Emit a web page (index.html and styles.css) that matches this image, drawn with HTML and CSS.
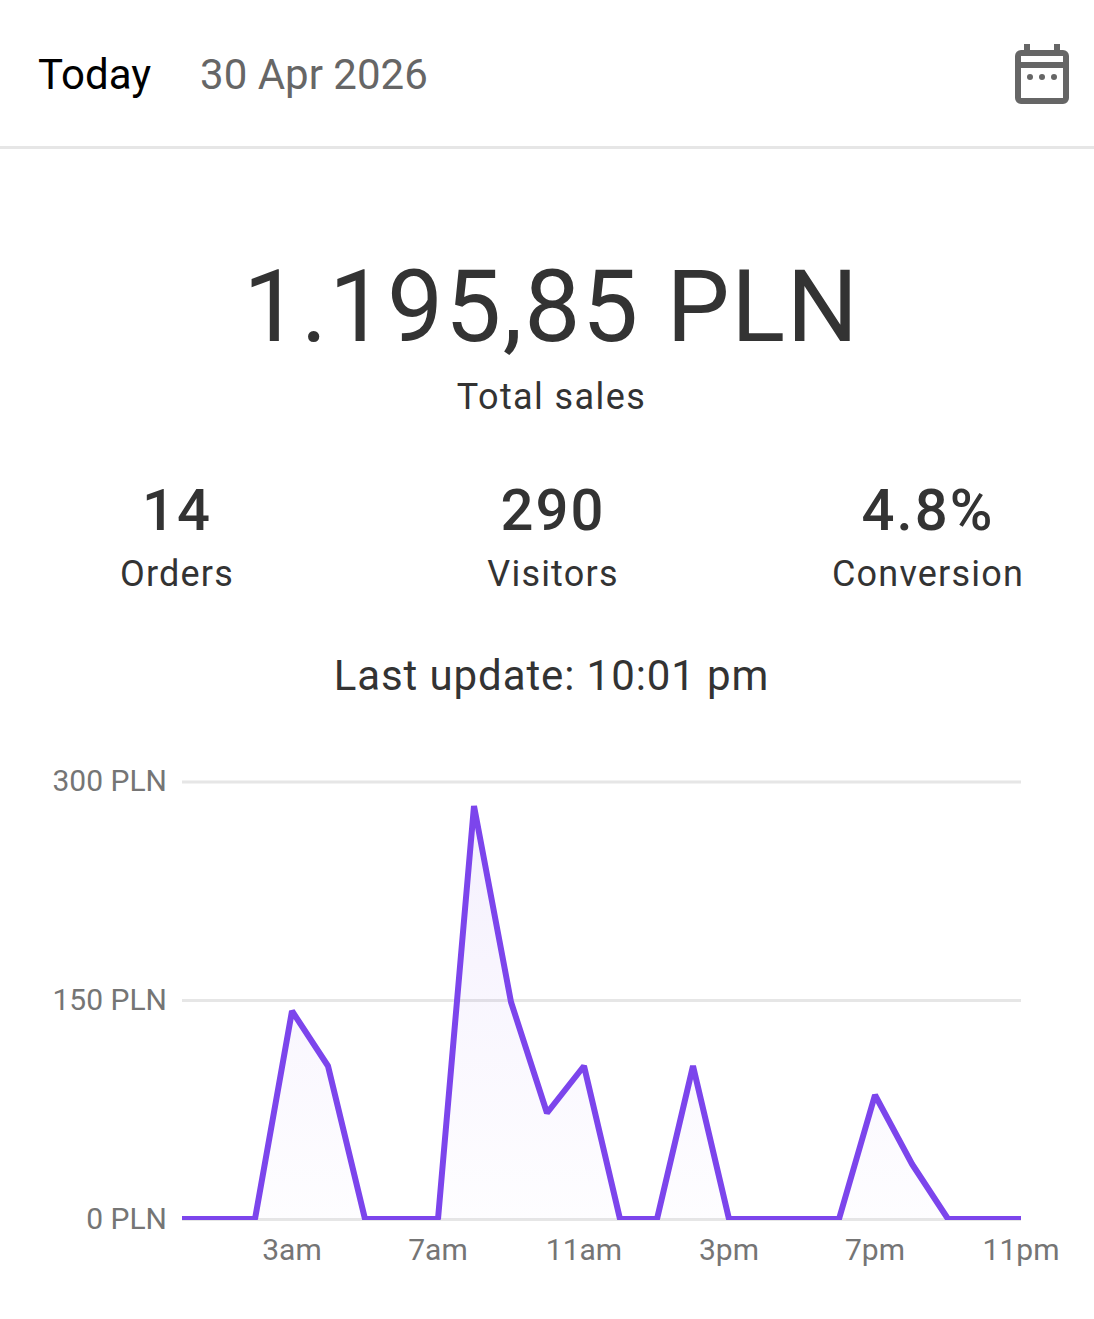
FILE: index.html
```html
<!DOCTYPE html>
<html lang="en">
<head>
<meta charset="utf-8">
<title>Today</title>
<link rel="stylesheet" href="styles.css">
</head>
<body>
<header class="bar">
  <div class="bar-dates"><span class="bar-today">Today</span><span class="bar-date">30 Apr 2026</span></div>
  <svg class="cal" width="54" height="60" viewBox="0 0 54 60" fill="none">
    <path fill="#666" fill-rule="evenodd" d="M9 0h6v6h24V0h6v6h3a6 6 0 0 1 6 6v42a6 6 0 0 1-6 6H6a6 6 0 0 1-6-6V12a6 6 0 0 1 6-6h3zM6 12v6h42v-6zM6 24v30h42V24z"/>
    <circle cx="15" cy="33" r="3" fill="#666"/>
    <circle cx="27" cy="33" r="3" fill="#666"/>
    <circle cx="39" cy="33" r="3" fill="#666"/>
  </svg>
</header>
<main>
  <section class="total">
    <div class="total-value">1.195,85 PLN</div>
    <div class="total-label">Total sales</div>
  </section>
  <section class="stats">
    <div class="stat"><div class="stat-value">14</div><div class="stat-label">Orders</div></div>
    <div class="stat"><div class="stat-value">290</div><div class="stat-label">Visitors</div></div>
    <div class="stat"><div class="stat-value">4.8%</div><div class="stat-label">Conversion</div></div>
  </section>
  <div class="update">Last update: 10:01 pm</div>
  <svg class="chart" width="1094" height="540" viewBox="0 760 1094 540">
    <defs>
      <linearGradient id="areaFill" x1="0" y1="0" x2="0" y2="1">
        <stop offset="0" stop-color="#7c45ec" stop-opacity="0.08"/>
        <stop offset="1" stop-color="#7c45ec" stop-opacity="0.01"/>
      </linearGradient>
      <clipPath id="plotClip"><rect x="182" y="760" width="839" height="460"/></clipPath>
    </defs>
    <g class="grid">
      <line x1="182" y1="782" x2="1021" y2="782"/>
      <line x1="182" y1="1000.5" x2="1021" y2="1000.5"/>
      <line x1="182" y1="1219.5" x2="1021" y2="1219.5"/>
    </g>
    <polygon class="area" fill="url(#areaFill)" points="182,1219 255,1219 292,1011 328,1066 365,1219 438,1219 474,806 511,1002 547,1113 584,1066 620,1219 657,1219 693,1066 729,1219 839,1219 875,1095 912,1164 948,1219 1021,1219"/>
    <polyline class="line" clip-path="url(#plotClip)" points="182,1219 255,1219 292,1011 328,1066 365,1219 438,1219 474,806 511,1002 547,1113 584,1066 620,1219 657,1219 693,1066 729,1219 839,1219 875,1095 912,1164 948,1219 1021,1219"/>
    <g class="ylab">
      <text x="167" y="791">300 PLN</text>
      <text x="167" y="1010">150 PLN</text>
      <text x="167" y="1229">0 PLN</text>
    </g>
    <g class="xlab">
      <text x="292" y="1260">3am</text>
      <text x="438" y="1260">7am</text>
      <text x="584" y="1260">11am</text>
      <text x="729" y="1260">3pm</text>
      <text x="875" y="1260">7pm</text>
      <text x="1021" y="1260">11pm</text>
    </g>
  </svg>
</main>
</body>
</html>
```
FILE: styles.css
```css
* { box-sizing: border-box; }
html, body { margin: 0; padding: 0; background: #fff; }
body { width: 1094px; height: 1319px; overflow: hidden; font-family: Roboto, sans-serif; color: #333; }
.bar { height: 149px; border-bottom: 3px solid #e6e6e6; display: flex; align-items: center; justify-content: space-between; padding: 2px 25px 0 38px; }
.bar-dates { display: flex; gap: 49px; font-size: 42px; padding-top: 1px; }
.bar-today { color: #000; }
.bar-date { color: #666; }
.cal { display: block; }
.total { text-align: center; padding: 103px 0 0 9px; }
.total-value { font-size: 100px; line-height: 110px; letter-spacing: 1.7px; }
.total-label { font-size: 36px; line-height: 44px; margin-top: 13px; letter-spacing: 1.4px; }
.stats { display: grid; grid-template-columns: 354px 398px 352px; margin-top: 57px; }
.stat { text-align: center; }
.stat-value { font-size: 58px; line-height: 68px; font-weight: 500; letter-spacing: 2px; }
.stat-label { font-size: 36px; line-height: 44px; margin-top: 8px; letter-spacing: 1.2px; }
.update { text-align: center; font-size: 42px; line-height: 50px; margin-top: 55px; padding-left: 9px; letter-spacing: 0.9px; }
.chart { display: block; margin-top: 59px; }
.grid line { stroke: #e6e6e6; stroke-width: 3; }
.line { fill: none; stroke: #7c45ec; stroke-width: 6; stroke-linejoin: bevel; }
.ylab text { font-size: 30px; fill: #757575; text-anchor: end; }
.xlab text { font-size: 30px; fill: #757575; text-anchor: middle; }
```
